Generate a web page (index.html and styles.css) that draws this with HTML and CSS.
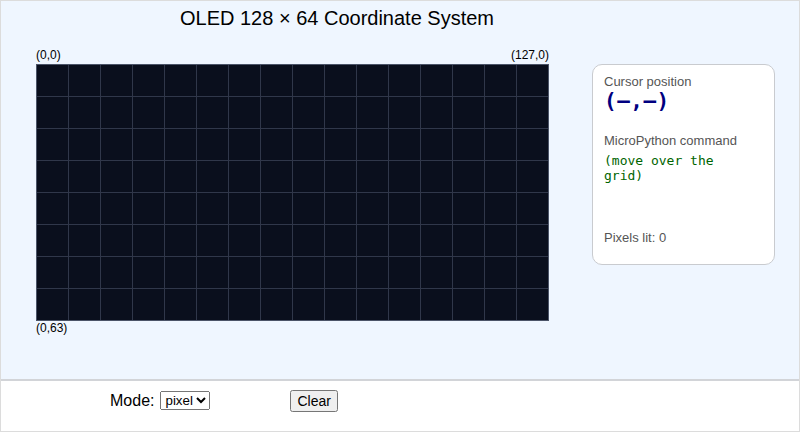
FILE: index.html
```html
<!DOCTYPE html>
<html>
<head>
<meta charset="utf-8">
<link rel="stylesheet" href="styles.css">
</head>
<body>
<div class="app">
  <div class="stage">
    <h1 class="title">OLED 128 × 64 Coordinate System</h1>
    <div class="main">
      <div class="display">
        <div class="labels labels-top"><span>(0,0)</span><span>(127,0)</span></div>
        <div class="canvas"></div>
        <div class="labels labels-bottom"><span>(0,63)</span></div>
      </div>
      <div class="panel">
        <div class="label">Cursor position</div>
        <div class="coords">(–,–)</div>
        <div class="label label-cmd">MicroPython command</div>
        <div class="cmd">(move over the grid)</div>
        <div class="label label-count">Pixels lit: 0</div>
      </div>
    </div>
  </div>
  <div class="controls">
    <label class="mode">Mode:</label>
    <select class="select"><option>pixel</option><option>line</option><option>rect</option></select>
    <button class="btn">Clear</button>
  </div>
</div>
</body>
</html>
```
FILE: styles.css
```css
html, body {
  margin: 0;
  padding: 0;
}
body {
  font-family: "Liberation Sans", Arial, sans-serif;
  color: #000;
  background: #fff;
}
.app {
  width: 800px;
  height: 432px;
  box-sizing: border-box;
  border: 1px solid #dcdcdc;
  display: flex;
  flex-direction: column;
}
.stage {
  background: #eff6ff;
  border-bottom: 2px solid #d2d4d8;
  padding-top: 5px;
  height: 373px;
}
.title {
  margin: 0;
  width: 672px;
  text-align: center;
  font-size: 20px;
  font-weight: normal;
  line-height: 24px;
}
.main {
  display: flex;
  align-items: flex-start;
  margin-top: 19px;
  padding-left: 35px;
}
.display {
  display: flex;
  flex-direction: column;
  width: 513px;
}
.labels {
  display: flex;
  justify-content: space-between;
  font-size: 12px;
}
.labels-top {
  height: 15px;
  line-height: 12px;
}
.labels-bottom {
  line-height: 14px;
}
.canvas {
  width: 513px;
  height: 257px;
  box-sizing: border-box;
  border: 1px solid #4b5468;
  background-color: #0a0f1d;
  background-image:
    linear-gradient(to right, #30374a 1px, transparent 1px),
    linear-gradient(to bottom, #30374a 1px, transparent 1px);
  background-size: 32px 32px;
  background-position: -1px -1px;
}
.panel {
  margin-left: 43px;
  margin-top: 15px;
  width: 183px;
  height: 201px;
  box-sizing: border-box;
  background: #fff;
  border: 1px solid #c9cbcf;
  border-radius: 10px;
  padding: 9px 11px;
}
.label {
  font-size: 13px;
  line-height: 15px;
  color: #555;
}
.coords {
  margin-top: 1px;
  font-family: "DejaVu Sans Mono", monospace;
  font-weight: bold;
  font-size: 21px;
  line-height: 22px;
  color: #000080;
  letter-spacing: 0.5px;
}
.label-cmd {
  margin-top: 21px;
}
.cmd {
  margin-top: 5px;
  width: 140px;
  font-family: "DejaVu Sans Mono", monospace;
  font-size: 13px;
  line-height: 15px;
  color: #006400;
}
.label-count {
  margin-top: 47px;
}
.controls {
  height: 50px;
  box-sizing: border-box;
  display: flex;
  align-items: center;
  padding-left: 109px;
  padding-bottom: 11px;
  background: #fff;
}
.mode {
  font-size: 16px;
  margin-right: 6px;
}
.select {
  font-family: "Liberation Sans", Arial, sans-serif;
  font-size: 13.33px;
  width: 50px;
}
.btn {
  font-family: "Liberation Sans", Arial, sans-serif;
  font-size: 14px;
  margin-left: 80px;
  padding: 1px 5px;
}
```
